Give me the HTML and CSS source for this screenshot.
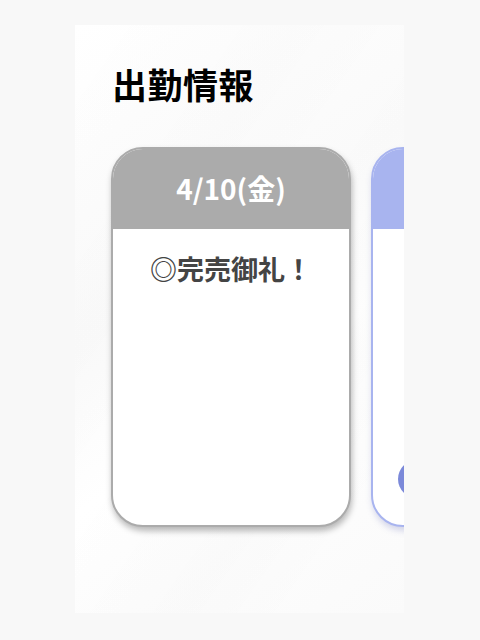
FILE: index.html
```html
<!DOCTYPE html>
<html lang="ja">
<head>
<meta charset="utf-8">
<link rel="stylesheet" href="styles.css">
</head>
<body>
<section class="panel">
  <h2 class="title">出勤情報</h2>
  <div class="cards">
    <article class="card card-gray">
      <div class="card-head">4/10(金)</div>
      <div class="card-body">
        <p class="status">◎完売御礼！</p>
      </div>
    </article>
    <article class="card card-blue">
      <div class="card-head"></div>
      <div class="card-body">
        <span class="dot"></span>
      </div>
    </article>
  </div>
</section>
</body>
</html>
```
FILE: styles.css
```css
html, body {
  margin: 0;
  padding: 0;
}
body {
  background: #f8f8f8;
  width: 480px;
  height: 640px;
  font-family: "Noto Sans CJK JP", "Noto Sans", sans-serif;
}
.panel {
  margin: 25px 0 0 75px;
  width: 329px;
  height: 588px;
  overflow: hidden;
  box-sizing: border-box;
  background:
    linear-gradient(125deg, rgba(0,0,0,0) 0%, rgba(0,0,0,0.008) 30%, rgba(0,0,0,0) 45%, rgba(0,0,0,0.012) 70%, rgba(0,0,0,0) 85%),
    linear-gradient(145deg, #ffffff 0%, #fafafa 40%, #ffffff 60%, #fafafa 100%);
}
.title {
  margin: 0;
  padding: 35px 0 0 37px;
  font-size: 35px;
  line-height: 48px;
  font-weight: 700;
  color: #000;
  letter-spacing: 0.5px;
}
.cards {
  display: flex;
  gap: 20px;
  margin-top: 39px;
  padding-left: 36px;
}
.card {
  flex: 0 0 auto;
  width: 240px;
  height: 380px;
  box-sizing: border-box;
  border-radius: 32px;
  overflow: hidden;
  display: flex;
  flex-direction: column;
  background: #fff;
  box-shadow: 1px 4px 6px rgba(0, 0, 0, 0.28);
}
.card-gray {
  border: 2px solid #ababab;
}
.card-blue {
  border: 2px solid #a8b4ef;
  box-shadow: 1px 4px 6px rgba(90, 100, 180, 0.25);
}
.card-head {
  height: 80px;
  flex: 0 0 auto;
  display: flex;
  align-items: center;
  justify-content: center;
  color: #fff;
  font-size: 28px;
  font-weight: 700;
  padding-bottom: 2px;
  box-sizing: border-box;
}
.card-gray .card-head {
  background: #ababab;
}
.card-blue .card-head {
  background: #a8b4ef;
}
.card-body {
  flex: 1;
  position: relative;
}
.status {
  margin: 18px 0 0;
  text-align: center;
  font-size: 27px;
  line-height: 44px;
  font-weight: 700;
  color: #444;
  letter-spacing: 0;
}
.dot {
  position: absolute;
  left: 25px;
  top: 231px;
  width: 38px;
  height: 38px;
  border-radius: 50%;
  background: #7b89d9;
}
```
